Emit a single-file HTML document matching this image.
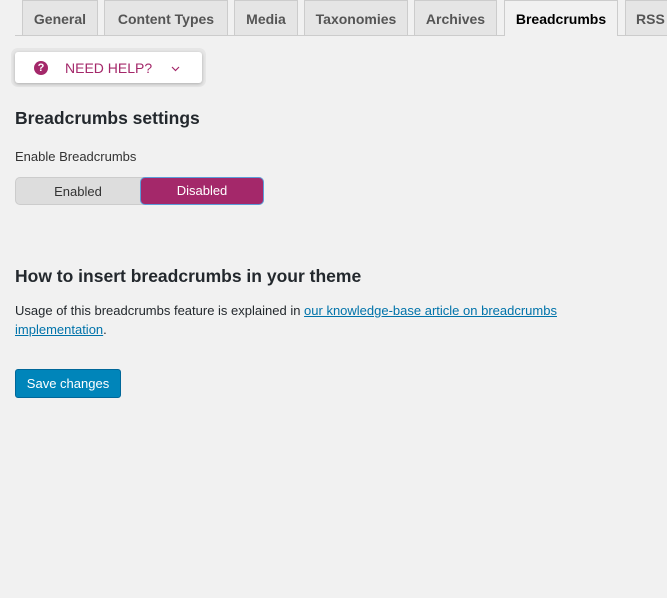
<!DOCTYPE html>
<html><head><style>
body{margin:0;width:667px;height:598px;background:#f1f1f1;font-family:"Liberation Sans",sans-serif;color:#23282d;position:relative;overflow:hidden}
.line{position:absolute;left:15px;right:0;top:35px;height:1px;background:#ccc}
.tab{position:absolute;top:0;height:35px;background:#e5e5e5;border:1px solid #ccc;border-bottom:none;font-size:14px;font-weight:bold;color:#555;line-height:36px;text-align:center;box-sizing:border-box}
.tab.a{background:#f1f1f1;color:#000;height:36px}
.help{position:absolute;left:15px;top:52px;width:187px;height:31px;background:#fff;border-radius:3px;box-shadow:0 1px 3px rgba(0,0,0,.25),0 0 0 4px #e6e6e6;color:#a4286a;font-size:14px}
h2{position:absolute;left:15px;margin:0;font-size:17.5px;font-weight:bold}
p{position:absolute;left:15px;margin:0;font-size:13px;line-height:19px}
a{color:#0073aa}
.tog{position:absolute;left:15px;top:177px;width:249px;height:28px;border-radius:5px;background:#ddd;border:1px solid #ccc;box-sizing:border-box;font-size:13px}
.btn{position:absolute;left:15px;top:369px;width:106px;height:29px;background:#0085ba;border:1px solid #006799;border-radius:3px;box-sizing:border-box;color:#fff;font-size:13px;text-align:center;line-height:27px}
</style></head><body>
<div class="line"></div>
<div class="tab" style="left:22px;width:76px">General</div>
<div class="tab" style="left:104px;width:124px">Content Types</div>
<div class="tab" style="left:234px;width:64px">Media</div>
<div class="tab" style="left:304px;width:104px">Taxonomies</div>
<div class="tab" style="left:414px;width:83px">Archives</div>
<div class="tab a" style="left:504px;width:114px">Breadcrumbs</div>
<div class="tab" style="left:625px;width:60px;text-align:left;padding-left:10px">RSS</div>
<div class="help">
<div style="position:absolute;left:19px;top:9px;width:14px;height:14px;border-radius:50%;background:#a4286a;color:#fff;font-size:11px;font-weight:bold;text-align:center;line-height:14px">?</div>
<span style="position:absolute;left:50px;top:8px">NEED HELP?</span>
<svg style="position:absolute;left:156px;top:14px" width="9" height="6"><path d="M1 1l3.5 3.5L8 1" stroke="#a4286a" stroke-width="1.2" fill="none"/></svg>
</div>
<h2 style="top:108px">Breadcrumbs settings</h2>
<p style="top:147px;color:#333">Enable Breadcrumbs</p>
<div class="tog">
<span style="position:absolute;left:0;width:124px;text-align:center;top:6px;color:#333">Enabled</span>
<div style="position:absolute;left:124px;top:-1px;width:124px;height:28px;background:#a4286a;border:1px solid #5b9dd9;border-radius:5px;box-sizing:border-box;color:#fff;text-align:center;line-height:25px">Disabled</div>
</div>
<h2 style="top:266px">How to insert breadcrumbs in your theme</h2>
<p style="top:301px;width:580px">Usage of this breadcrumbs feature is explained in <a href="#">our knowledge-base article on breadcrumbs implementation</a>.</p>
<div class="btn">Save changes</div>
</body></html>
